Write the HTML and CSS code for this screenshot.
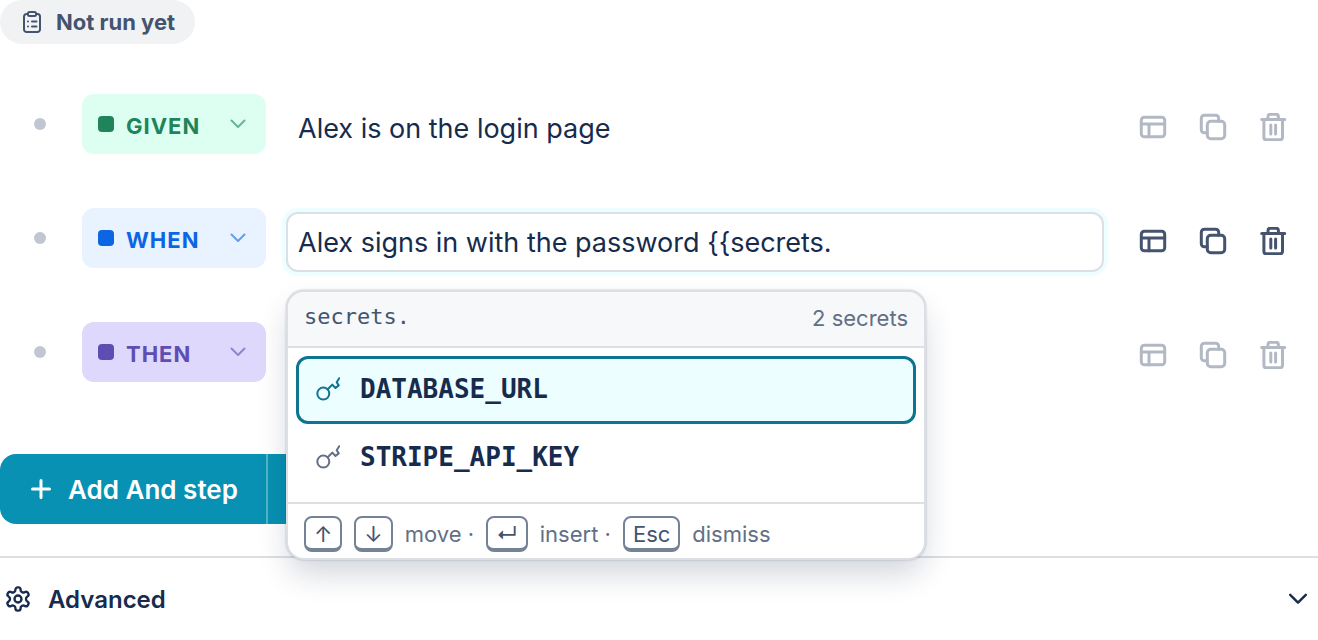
FILE: index.html
```
<!DOCTYPE html>
<html lang="en">
<head>
    <meta charset="UTF-8">
    <meta name="viewport" content="width=device-width, initial-scale=1.0">
    <title>Scenario steps</title>
    <link rel="stylesheet" href="styles.css">
</head>
<body>
    <svg class="sprite" aria-hidden="true">
        <symbol id="icon-table" viewBox="0 0 28 28">
            <rect x="2.3" y="4.3" width="23.4" height="19.4" rx="3"/>
            <path d="M2.3 11h23.4M10 11v12.7"/>
        </symbol>
        <symbol id="icon-copy" viewBox="0 0 28 28">
            <rect x="8.3" y="8.3" width="17.4" height="17.4" rx="3.5"/>
            <path d="M19.7 8.3V5.3a3 3 0 0 0-3-3H5.3a3 3 0 0 0-3 3v11.4a3 3 0 0 0 3 3h3"/>
        </symbol>
        <symbol id="icon-trash" viewBox="0 0 28 28">
            <path d="M2.7 6.5h23M4.9 6.5v18a2.3 2.3 0 0 0 2.3 2.3h14a2.3 2.3 0 0 0 2.3-2.3v-18M9 6.5V3.6a2.4 2.4 0 0 1 2.4-2.4h5.6a2.4 2.4 0 0 1 2.4 2.4v2.9M11.8 12v9M16.6 12v9"/>
        </symbol>
        <symbol id="icon-chevron" viewBox="0 0 16 10">
            <path d="M1.5 1.5 8 8l6.5-6.5"/>
        </symbol>
        <symbol id="icon-key" viewBox="0 0 24 24">
            <circle cx="7.3" cy="16.600" r="6"/>
            <path d="M11.700 12.200l4.600-4.600 3.200 3.400 3.200-2.600-2-3.200L23.200 1.200"/>
        </symbol>
    </svg>

    <div class="status">
        <svg class="status-icon" viewBox="0 0 18 22" aria-hidden="true">
            <path d="M5 3H3.500a2.500 2.500 0 0 0-2.500 2.500v13A2.500 2.500 0 0 0 3.500 21h11a2.500 2.500 0 0 0 2.500-2.500v-13A2.500 2.500 0 0 0 14.500 3H13"/>
            <rect x="5" y="1" width="8" height="4" rx="1.500"/>
            <path d="M5 10.500h0M9 10.500h4.500M5 15.500h0M9 15.500h4.500"/>
        </svg>
        Not run yet
    </div>

    <ol class="steps">
        <li class="step">
            <span class="step-dot"></span>
            <label class="keyword given">
                <span class="keyword-mark"></span>
                <select aria-label="Keyword of step 1">
                    <option selected>GIVEN</option>
                    <option>WHEN</option>
                    <option>THEN</option>
                </select>
                <svg class="keyword-chevron" aria-hidden="true"><use href="#icon-chevron"/></svg>
            </label>
            <div class="field">
                <input type="text" aria-label="Text of step 1" value="Alex is on the login page">
            </div>
            <div class="actions">
                <button type="button" aria-label="Add data table"><svg><use href="#icon-table"/></svg></button>
                <button type="button" aria-label="Duplicate step"><svg><use href="#icon-copy"/></svg></button>
                <button type="button" aria-label="Delete step"><svg><use href="#icon-trash"/></svg></button>
            </div>
        </li>

        <li class="step active">
            <span class="step-dot"></span>
            <label class="keyword when">
                <span class="keyword-mark"></span>
                <select aria-label="Keyword of step 2">
                    <option>GIVEN</option>
                    <option selected>WHEN</option>
                    <option>THEN</option>
                </select>
                <svg class="keyword-chevron" aria-hidden="true"><use href="#icon-chevron"/></svg>
            </label>
            <div class="field">
                <input type="text" aria-label="Text of step 2" aria-controls="suggestions" value="Alex signs in with the password {{secrets.">
                <div class="popup">
                    <div class="popup-header">
                        <code>secrets.</code>
                        <span>2 secrets</span>
                    </div>
                    <ul class="popup-list" id="suggestions" role="listbox" aria-label="Secrets">
                        <li class="option selected" role="option" aria-selected="true">
                            <svg aria-hidden="true"><use href="#icon-key"/></svg>
                            <span>DATABASE_URL</span>
                        </li>
                        <li class="option" role="option" aria-selected="false">
                            <svg aria-hidden="true"><use href="#icon-key"/></svg>
                            <span>STRIPE_API_KEY</span>
                        </li>
                    </ul>
                    <div class="popup-footer">
                        <kbd>↑</kbd>
                        <kbd>↓</kbd>
                        <span>move ·</span>
                        <kbd>↵</kbd>
                        <span>insert ·</span>
                        <kbd>Esc</kbd>
                        <span>dismiss</span>
                    </div>
                </div>
            </div>
            <div class="actions">
                <button type="button" aria-label="Add data table"><svg><use href="#icon-table"/></svg></button>
                <button type="button" aria-label="Duplicate step"><svg><use href="#icon-copy"/></svg></button>
                <button type="button" aria-label="Delete step"><svg><use href="#icon-trash"/></svg></button>
            </div>
        </li>

        <li class="step">
            <span class="step-dot"></span>
            <label class="keyword then">
                <span class="keyword-mark"></span>
                <select aria-label="Keyword of step 3">
                    <option>GIVEN</option>
                    <option>WHEN</option>
                    <option selected>THEN</option>
                </select>
                <svg class="keyword-chevron" aria-hidden="true"><use href="#icon-chevron"/></svg>
            </label>
            <div class="field">
                <input type="text" aria-label="Text of step 3">
            </div>
            <div class="actions">
                <button type="button" aria-label="Add data table"><svg><use href="#icon-table"/></svg></button>
                <button type="button" aria-label="Duplicate step"><svg><use href="#icon-copy"/></svg></button>
                <button type="button" aria-label="Delete step"><svg><use href="#icon-trash"/></svg></button>
            </div>
        </li>
    </ol>

    <div class="add-step">
        <button type="button" class="add-main">
            <svg viewBox="0 0 20 20" aria-hidden="true"><path d="M10 1.500v17M1.500 10h17"/></svg>
            Add And step
        </button>
        <button type="button" class="add-more" aria-label="More step types">
            <svg aria-hidden="true"><use href="#icon-chevron"/></svg>
        </button>
    </div>

    <button type="button" class="advanced" aria-expanded="false">
        <svg class="advanced-icon" viewBox="0 0 24 24" aria-hidden="true">
            <path d="M12.22 2h-.44a2 2 0 0 0-2 2v.18a2 2 0 0 1-1 1.73l-.43.25a2 2 0 0 1-2 0l-.15-.08a2 2 0 0 0-2.730.73l-.22.38a2 2 0 0 0 .73 2.730l.15.1a2 2 0 0 1 1 1.720v.51a2 2 0 0 1-1 1.740l-.15.09a2 2 0 0 0-.73 2.730l.22.38a2 2 0 0 0 2.730.73l.15-.08a2 2 0 0 1 2 0l.43.25a2 2 0 0 1 1 1.730V20a2 2 0 0 0 2 2h.44a2 2 0 0 0 2-2v-.18a2 2 0 0 1 1-1.730l.43-.25a2 2 0 0 1 2 0l.15.08a2 2 0 0 0 2.730-.73l.22-.39a2 2 0 0 0-.73-2.730l-.15-.08a2 2 0 0 1-1-1.740v-.5a2 2 0 0 1 1-1.740l.15-.09a2 2 0 0 0 .73-2.730l-.22-.38a2 2 0 0 0-2.730-.73l-.15.08a2 2 0 0 1-2 0l-.43-.25a2 2 0 0 1-1-1.730V4a2 2 0 0 0-2-2z"/>
            <circle cx="12" cy="12" r="3"/>
        </svg>
        Advanced
        <svg class="advanced-chevron" aria-hidden="true"><use href="#icon-chevron"/></svg>
    </button>
</body>
</html>
```
FILE: styles.css
```
* {
    box-sizing: border-box;
}
body {
    margin: 0;
    font-family: Inter, sans-serif;
    font-size: 22px;
    color: #172b4d;
    background-color: white;
}
button,
input,
select {
    font: inherit;
    color: inherit;
    border: none;
    background: none;
    margin: 0;
    padding: 0;
}
svg {
    flex: none;
    fill: none;
    stroke: currentColor;
    stroke-width: 2;
    stroke-linecap: round;
    stroke-linejoin: round;
}
.sprite {
    display: none;
}

/* run status */
.status {
    display: flex;
    align-items: center;
    gap: 15px;
    width: max-content;
    height: 44px;
    padding: 0 20px 0 23px;
    border-radius: 22px;
    background-color: #f1f2f4;
    color: #44546f;
    font-weight: 700;
}
.status-icon {
    width: 18px;
    height: 22px;
}

/* steps */
.steps {
    display: flex;
    flex-direction: column;
    gap: 50px;
    margin: 50px 0 0;
    padding: 0 16px 0 34px;
    list-style: none;
}
.step {
    display: flex;
    align-items: flex-start;
    height: 64px;
}
.step-dot {
    width: 12px;
    height: 12px;
    margin: 24px 36px 24px 0;
    border-radius: 50%;
    background-color: #c1c7d0;
}
.keyword {
    position: relative;
    display: flex;
    align-items: center;
    width: 184px;
    height: 60px;
    border-radius: 12px;
}
.keyword select {
    width: 100%;
    height: 60px;
    padding: 4px 16px 0 44px;
    appearance: none;
    font-weight: 700;
    letter-spacing: 1px;
}
.keyword-mark {
    position: absolute;
    left: 16px;
    width: 16px;
    height: 16px;
    border-radius: 4px;
    background-color: currentColor;
}
.keyword-chevron {
    position: absolute;
    right: 20px;
    width: 16px;
    height: 10px;
    opacity: 0.6;
}
.keyword.given {
    background-color: #dcfff1;
    color: #1f845a;
}
.keyword.when {
    background-color: #e9f2ff;
    color: #0c66e4;
}
.keyword.then {
    background-color: #dfd8fd;
    color: #5e4db2;
}
.field {
    position: relative;
    flex: 1;
    margin: 4px 20px 0;
}
.field input {
    width: 100%;
    height: 60px;
    padding: 0 10px;
    border: 2px solid transparent;
    border-radius: 12px;
    font-size: 27px;
}
.step.active .field input {
    border-color: #dcdfe4;
    background-color: white;
    box-shadow: 0 0 0 4px #ecfeff;
}
.actions {
    display: flex;
    gap: 2px;
    margin-top: 4px;
    color: #b3b9c4;
}
.actions button {
    display: flex;
    align-items: center;
    justify-content: center;
    width: 58px;
    height: 58px;
}
.actions svg {
    width: 28px;
    height: 28px;
    stroke-width: 3;
}
.step.active .actions {
    color: #44546f;
}

/* suggestions */
.popup {
    position: absolute;
    top: 78px;
    left: 0;
    z-index: 1;
    width: 640px;
    overflow: hidden;
    border: 2px solid #dcdfe4;
    border-radius: 18px;
    background-color: white;
    box-shadow: 0 16px 32px -4px rgba(9, 30, 66, 0.2), 0 0 2px rgba(9, 30, 66, 0.3);
}
.popup-header {
    display: flex;
    align-items: center;
    justify-content: space-between;
    height: 56px;
    padding: 0 16px 2px;
    border-bottom: 2px solid #dcdfe4;
    background-color: #f7f8f9;
    color: #626f86;
}
.popup-header code {
    padding-bottom: 4px;
    font-family: "DejaVu Sans Mono", monospace;
    color: #44546f;
}
.popup-list {
    margin: 0;
    padding: 8px 8px 10px;
    list-style: none;
}
.option {
    display: flex;
    align-items: center;
    gap: 20px;
    height: 68px;
    padding: 0 17px 2px;
    border: 3px solid transparent;
    border-radius: 12px;
    font: bold 26px "DejaVu Sans Mono", monospace;
}
.option svg {
    width: 24px;
    height: 24px;
    color: #626f86;
}
.option.selected {
    border-color: #0e7490;
    background-color: #ecfeff;
}
.option.selected svg {
    color: #0e7490;
}
.popup-footer {
    display: flex;
    align-items: center;
    gap: 12px;
    height: 56px;
    padding: 6px 16px 0;
    border-top: 2px solid #dcdfe4;
    color: #626f86;
}
kbd {
    height: 36px;
    padding: 0 8px;
    border: 2px solid #758195;
    border-bottom-width: 4px;
    border-radius: 8px;
    font-family: inherit;
    font-size: 22px;
    line-height: 32px;
    color: #44546f;
}

/* add step */
.add-step {
    display: flex;
    width: max-content;
    height: 70px;
    margin-top: 68px;
    border-radius: 16px;
    background-color: #0891b2;
    color: white;
}
.add-main {
    display: flex;
    align-items: center;
    gap: 17px;
    padding: 0 28px 0 31px;
    font-size: 26px;
    font-weight: 600;
}
.add-main svg {
    width: 20px;
    height: 20px;
    stroke-width: 3;
}
.add-more {
    padding: 0 24px;
    border-left: 2px solid rgba(255, 255, 255, 0.3);
}
.add-more svg {
    width: 16px;
    height: 10px;
}

/* advanced */
.advanced {
    display: flex;
    align-items: center;
    gap: 16px;
    width: 100%;
    height: 84px;
    margin-top: 32px;
    padding: 0 10px 0 4px;
    border-top: 2px solid #dcdfe4;
    font-size: 24px;
    font-weight: 600;
}
.advanced-icon {
    width: 28px;
    height: 28px;
}
.advanced-chevron {
    width: 20px;
    height: 12px;
    margin-left: auto;
}
```
